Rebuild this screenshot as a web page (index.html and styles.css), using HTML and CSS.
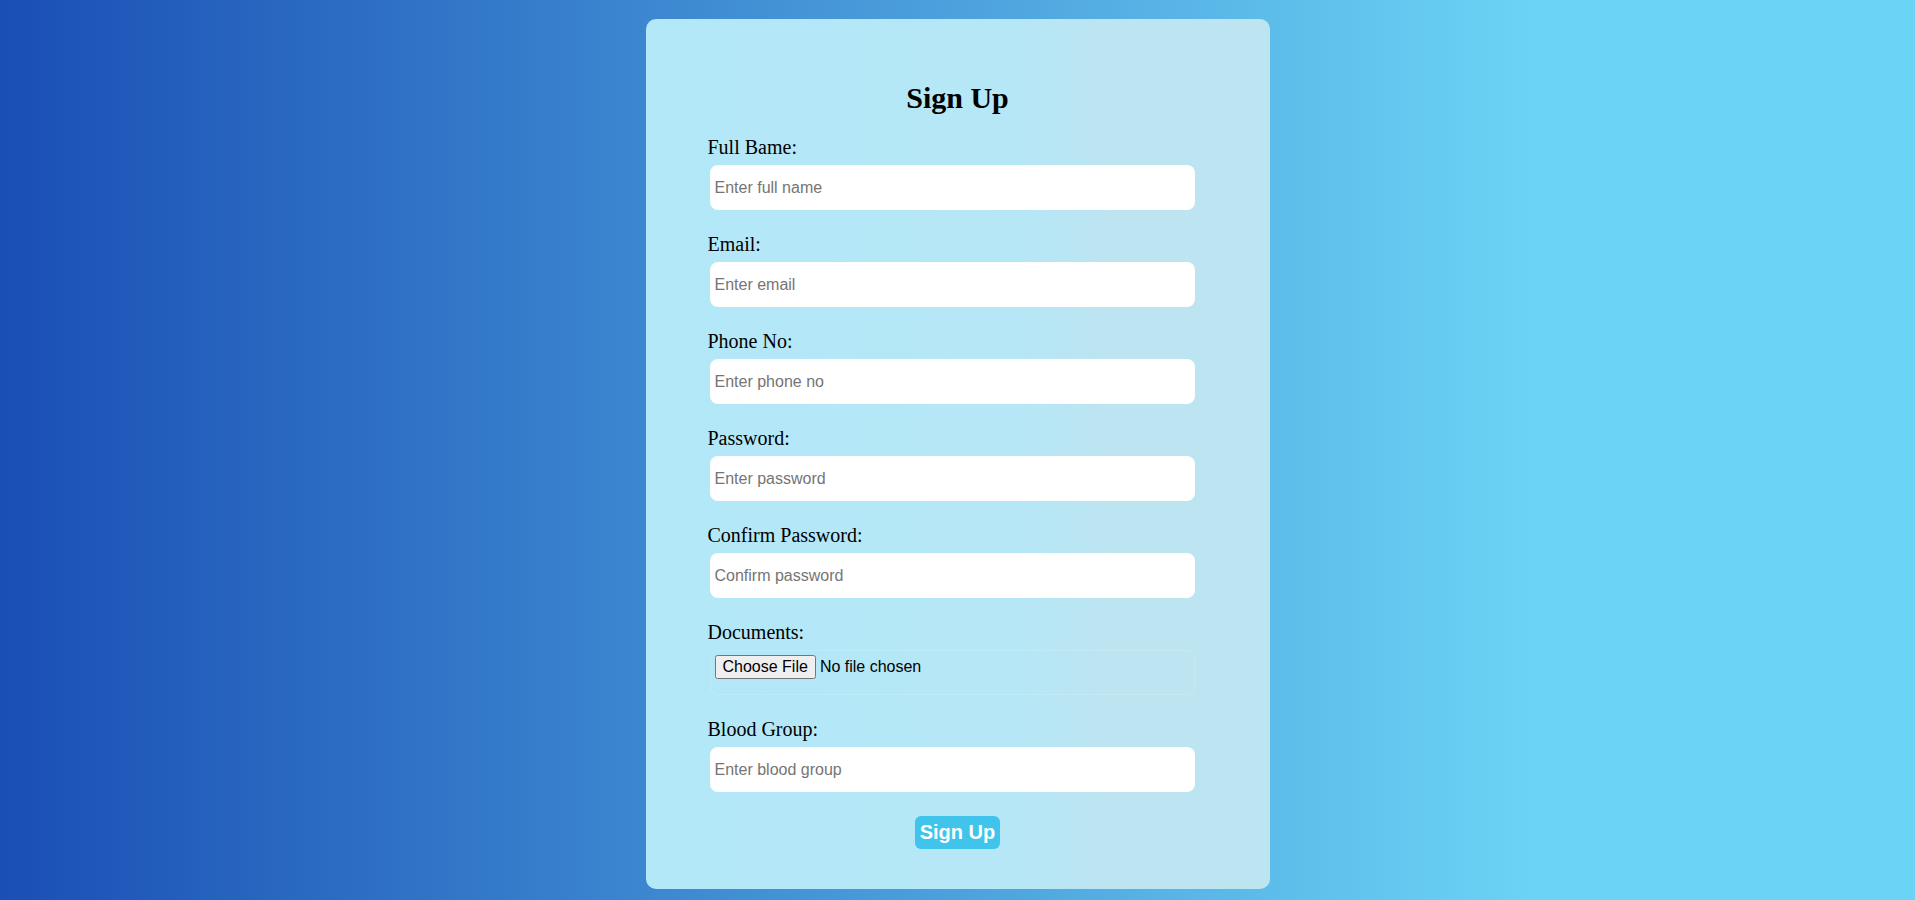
FILE: index.html
```html
<!DOCTYPE html>
<html lang="en">
<head>
<meta charset="utf-8">
<title>Sign Up</title>
<link rel="stylesheet" href="styles.css">
</head>
<body>
<div class="card">
  <h1 class="title">Sign Up</h1>
  <form class="form">
    <label class="label" for="name">Full Bame:</label>
    <input class="field" id="name" type="text" placeholder="Enter full name">
    <label class="label" for="email">Email:</label>
    <input class="field" id="email" type="email" placeholder="Enter email">
    <label class="label" for="phone">Phone No:</label>
    <input class="field" id="phone" type="text" placeholder="Enter phone no">
    <label class="label" for="pw">Password:</label>
    <input class="field" id="pw" type="password" placeholder="Enter password">
    <label class="label" for="cpw">Confirm Password:</label>
    <input class="field" id="cpw" type="password" placeholder="Confirm password">
    <label class="label" for="docs">Documents:</label>
    <input class="field file" id="docs" type="file">
    <label class="label" for="blood">Blood Group:</label>
    <input class="field" id="blood" type="text" placeholder="Enter blood group">
    <button class="submit" type="submit">Sign Up</button>
  </form>
</div>
</body>
</html>
```
FILE: styles.css
```css
html, body {
  margin: 0;
  padding: 0;
}
body {
  min-height: 900px;
  box-sizing: border-box;
  padding-top: 19px;
  background: linear-gradient(to right, #1a4fb5 0%, #6bd3f5 80%, #6bd3f5 100%);
  font-family: "Liberation Serif", "Times New Roman", serif;
}
.card {
  width: 624px;
  box-sizing: border-box;
  margin: 0 auto;
  padding: 42px 62px 40px 62px;
  border-radius: 10px;
  background: linear-gradient(to right, #b2e8f8 0%, #b6e7f6 60%, #bde4f1 75%, #bde4f1 100%);
}
.title {
  font-family: "Liberation Serif", "Times New Roman", serif;
  font-size: 30px;
  line-height: 34px;
  font-weight: bold;
  text-align: center;
  margin: 20px 0 20.6px;
  color: #000;
}
.form {
  display: flex;
  flex-direction: column;
  align-items: flex-start;
}
.label {
  display: block;
  font-size: 20px;
  line-height: 22px;
  color: #000;
}
.field {
  display: block;
  box-sizing: border-box;
  width: 485px;
  height: 45px;
  margin: 7.5px 0 22.5px 2px;
  padding: 4px;
  border: 1px solid rgba(255, 255, 255, 0.15);
  border-radius: 8px;
  background: #fff;
  font-family: "Liberation Sans", Arial, sans-serif;
  font-size: 16px;
  color: #000;
  outline: none;
}
.field::placeholder {
  color: #757575;
}
.file {
  background: transparent;
}
.file::file-selector-button {
  font-family: "Liberation Sans", Arial, sans-serif;
  font-size: 16px;
}
.submit {
  align-self: center;
  margin: 1.5px 0 0;
  padding: 5px;
  border: none;
  border-radius: 6px;
  background: #40c4ec;
  color: #fff;
  font-family: "Liberation Sans", Arial, sans-serif;
  font-size: 20px;
  font-weight: bold;
  line-height: 23px;
}
```
